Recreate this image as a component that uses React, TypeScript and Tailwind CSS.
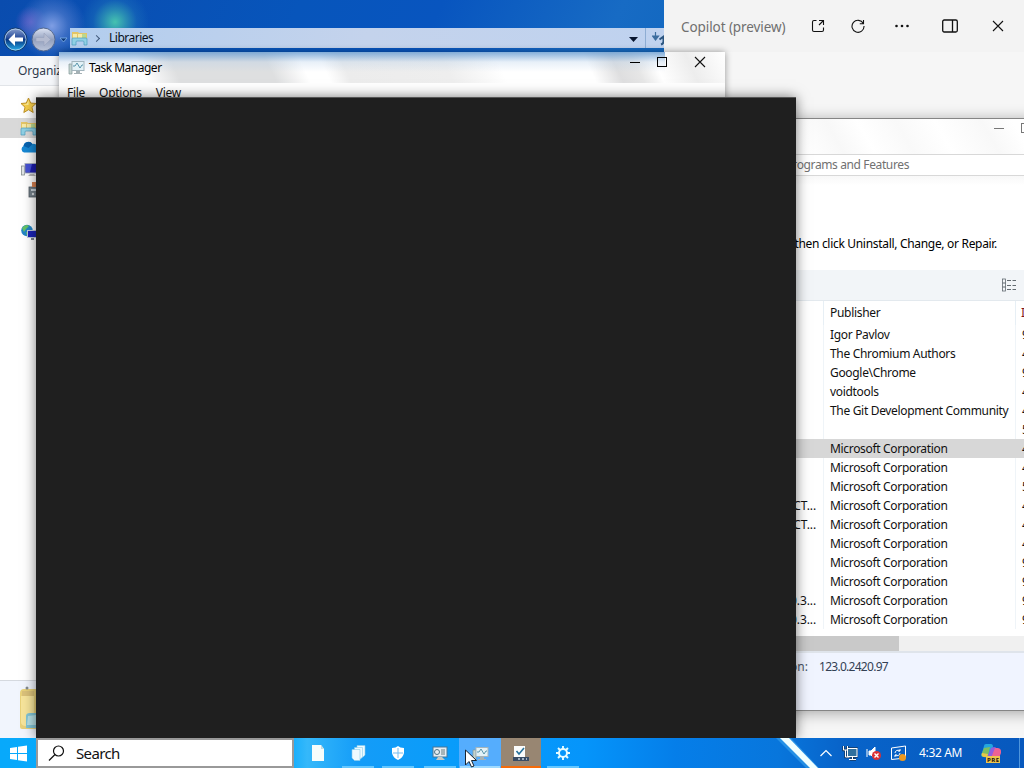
import type { ReactNode } from 'react'

interface Program {
  name?: string
  publisher: string
  installed: string
}

const PROGRAMS: Program[] = [
  { publisher: 'Igor Pavlov', installed: '9/5' },
  { publisher: 'The Chromium Authors', installed: '4/5' },
  { publisher: 'Google\\Chrome', installed: '9/5' },
  { publisher: 'voidtools', installed: '4/5' },
  { publisher: 'The Git Development Community', installed: '4/5' },
  { publisher: '', installed: '5/5' },
  { publisher: 'Microsoft Corporation', installed: '4/5' },
  { publisher: 'Microsoft Corporation', installed: '4/5' },
  { publisher: 'Microsoft Corporation', installed: '5/5' },
  { name: 'CT...', publisher: 'Microsoft Corporation', installed: '4/5' },
  { name: 'CT...', publisher: 'Microsoft Corporation', installed: '4/5' },
  { publisher: 'Microsoft Corporation', installed: '4/5' },
  { publisher: 'Microsoft Corporation', installed: '9/5' },
  { publisher: 'Microsoft Corporation', installed: '9/5' },
  { name: '0.3...', publisher: 'Microsoft Corporation', installed: '9/5' },
  { name: '0.3...', publisher: 'Microsoft Corporation', installed: '9/5' },
]

const SELECTED = 6

function LibraryIcon() {
  return (
    <svg width="17" height="16" viewBox="0 0 17 16" className="shrink-0">
      <path d="M1 2h6l1 1h8v7H1z" fill="#e3c567" />
      <path d="M2 4h4v7H2zM7 4h4v7H7z" fill="#f8eba8" />
      <path d="M11 4h4v6h-4z" fill="#b9d890" />
      <path d="M1 15V9q0-1 1-1h13q1 0 1 1v6h-3v-3q0-1-1-1H6q-1 0-1 1v3z" fill="#8fd0e4" stroke="#4a9bbd" strokeWidth=".7" />
    </svg>
  )
}

function TaskManagerIcon({ className }: { className?: string }) {
  return (
    <svg width="17" height="15" viewBox="0 0 17 15" className={className}>
      <path d="M1 4h3v10H1z" fill="#c3d3cf" stroke="#839a9a" strokeWidth=".7" />
      <rect x="4" y="1.500" width="12" height="9" fill="#e2f1f6" stroke="#a3b5bd" />
      <path d="M5 6h2l2-3 3 5 2-3h1" fill="none" stroke="#4b8ba3" strokeWidth=".9" />
      <path d="M8 11h4v2h2v1H6v-1h2z" fill="#a5b1b5" />
    </svg>
  )
}

function CloseIcon({ size }: { size: number }) {
  return (
    <svg width={size} height={size} viewBox="0 0 12 12">
      <path d="M1 1l10 10M11 1L1 11" fill="none" stroke="#111" strokeWidth="1.1" />
    </svg>
  )
}

function Sidebar() {
  return (
    <div className="flex h-[594px] flex-col bg-white pt-[12px]">
      <div className="-mt-px h-[21px] pl-5">
        <svg width="17" height="17" viewBox="0 0 17 17">
          <path d="M8.500 1l2.200 5 5.300.5-4 3.700 1.200 5.300-4.700-2.800-4.700 2.800L5 10.200 1 6.500 6.300 6z" fill="#f7cf4b" stroke="#b98a1e" strokeWidth=".9" />
          <path d="M8.500 3v5L3 7.200l4-.5z" fill="#fdf0a8" />
        </svg>
      </div>
      <div className="flex h-[20px] items-center bg-[#d9d9d9] pl-5">
        <LibraryIcon />
      </div>
      <div className="h-[20px] pl-5 pt-[2px]">
        <svg width="18" height="14" viewBox="0 0 18 14">
          <path d="M4 12.500a3.500 3.500 0 0 1-.4-6.500A5 5 0 0 1 12.500 4 5 5 0 0 1 17 12.500z" fill="#1688d4" />
          <path d="M3.500 6A5 5 0 0 1 12.500 4l-4 4z" fill="#0763b0" />
        </svg>
      </div>
      <div className="h-[22px] pl-5 pt-[4px]">
        <svg width="18" height="16" viewBox="0 0 18 16">
          <rect x="1.500" y="4" width="3" height="9" fill="#e0e4e4" stroke="#858e8e" strokeWidth=".8" />
          <rect x="5" y="1.500" width="12" height="9.500" fill="#1c1cad" stroke="#aab2c6" />
          <path d="M6 2h6l-2 8H6z" fill="#4652d6" />
          <path d="M10 12h4l2 2H8z" fill="#b5b5b5" />
        </svg>
      </div>
      <div className="h-[43px] pl-7 pt-px">
        <svg width="12" height="17" viewBox="0 0 12 17">
          <rect x="1" y="6" width="10" height="10" fill="#74808a" stroke="#505a62" strokeWidth=".8" />
          <rect x="4" y="1" width="5" height="5" fill="#d98252" />
          <path d="M3 8h5v2H3z" fill="#c7d1d8" />
          <circle cx="5" cy="13" r="1.200" fill="#d7dde0" />
        </svg>
      </div>
      <div className="h-[20px] pl-5 pt-px">
        <svg width="18" height="17" viewBox="0 0 18 17">
          <circle cx="7" cy="6.500" r="5.800" fill="#2285c6" />
          <path d="M2 4q4-5 7-2l-3 3-2 3zM6 8l4 1-3 3z" fill="#65c266" />
          <rect x="7.500" y="6.500" width="10" height="7" fill="#1b24b8" stroke="#bcc9dd" />
          <path d="M11 14h3v2h-3z" fill="#7b8390" />
        </svg>
      </div>
    </div>
  )
}

function ExplorerWindow() {
  return (
    <div className="absolute left-0 top-0 flex h-[738px] w-[664px] flex-col bg-[linear-gradient(115deg,#0a4cae_0%,#0755bb_30%,#0855bf_44%,#176bc4_62%,#0e65bd_76%,#024da9_79%,#1262b9_84%,#0759ae_100%)]">
      <div className="pointer-events-none absolute left-0 top-0 h-14 w-full bg-[radial-gradient(circle_at_115px_22px,#46c2b0_0,#2f98b4cc_12px,#1f76bb66_22px,transparent_34px),radial-gradient(circle_at_52px_26px,#7f9ee4_0,#5880d099_16px,transparent_34px),radial-gradient(circle_at_31px_22px,#5f57c4_0,transparent_16px)]" />
      <div className="relative flex h-14 shrink-0 items-end">
        <svg width="70" height="28" viewBox="0 0 70 28" className="mb-[3px] shrink-0">
          <defs>
            <linearGradient id="back" x2="0" y2="1">
              <stop stopColor="#8fa4d0" />
              <stop offset=".42" stopColor="#2a4f9d" />
              <stop offset=".5" stopColor="#073581" />
              <stop offset="1" stopColor="#28b1ed" />
            </linearGradient>
            <linearGradient id="forward" x2="0" y2="1">
              <stop stopColor="#dde4f4" />
              <stop offset=".5" stopColor="#929fbd" />
              <stop offset="1" stopColor="#bdc6da" />
            </linearGradient>
          </defs>
          <circle cx="15.500" cy="14.500" r="11.500" fill="url(#back)" stroke="#123769" />
          <circle cx="15.500" cy="14.500" r="10.500" fill="none" stroke="#b6d5ef" strokeWidth=".8" />
          <path d="M15 8l-6.500 6.500L15 21v-4.500h8v-4h-8z" fill="#fff" />
          <circle cx="43.500" cy="14.500" r="11.500" fill="url(#forward)" stroke="#526890" />
          <path d="M44 8l6.500 6.500L44 21v-4.500h-8v-4h8z" fill="#b4bbd0" stroke="#98a3be" strokeWidth=".6" />
          <path d="M60 13h7l-3.500 4z" fill="#0b397c" stroke="#80b3e9" strokeWidth=".8" />
        </svg>
        <div className="mb-2 flex h-5 flex-1 items-center bg-gradient-to-r from-[#b2cdee] via-[#c4d3ec] to-[#bfd2ef] pl-px">
          <LibraryIcon />
          <span className="ml-[6px] h-[5px] w-[5px] rotate-45 border-r border-t border-[#425b7c]" />
          <span className="ml-[10px] text-[12px] tracking-[-0.5px] text-[#081120]">Libraries</span>
          <svg width="9" height="5" viewBox="0 0 9 5" className="ml-auto mr-[7px] mt-[2px]">
            <path d="M0 0h9L4.500 5z" fill="#08152e" />
          </svg>
          <div className="flex h-5 w-[19px] items-center overflow-hidden border-l border-[#8eadd3] pl-[6px]">
            <svg width="13" height="14" viewBox="0 0 13 14" className="mt-px shrink-0">
              <path d="M3.500 0v5M.5 4h6l-3 4z" fill="#3c6d9e" stroke="#3c6d9e" strokeWidth="1.200" />
              <path d="M7.500 7.500l4-3v5q0 2-2.500 3" fill="none" stroke="#2c5680" strokeWidth="2" />
            </svg>
          </div>
        </div>
      </div>
      <div className="flex h-[30px] shrink-0 items-center border-b border-[#e1e4e8] bg-[#f5f7fa] pl-[18px] text-[12px] tracking-[-0.1px] text-[#2f3a4c]">
        Organize
      </div>
      <Sidebar />
      <div className="flex flex-1 border-t border-[#d5d9df] bg-[#f1f5fd] pl-[18px] pt-1">
        <svg width="42" height="48" viewBox="0 0 42 48">
          <path d="M2 8q0-4 4-4h22v40H4q-2 0-2-2z" fill="#e8d17a" />
          <path d="M3 11h13v32l-9-2q-4-1-4-4z" fill="#f6e49b" />
          <path d="M4 6h12v5H4z" fill="#dac17a" />
          <circle cx="9" cy="3" r="1.500" fill="#848b8f" />
          <path d="M8 43V31q0-3 4-3h18v15z" fill="#80c4d6" />
          <path d="M10 31l8-1v10H9z" fill="#b6e0e5" />
        </svg>
      </div>
    </div>
  )
}

function CopilotPanel() {
  return (
    <div className="absolute right-0 top-0 flex h-[738px] w-[360px] flex-col bg-[#f6f6f6]">
      <div className="flex h-[52px] items-center bg-[#f3f3f3] pl-[17px] text-[#111]">
        <span className="w-[130px] pt-[3px] text-[13.500px] tracking-[-0.08px] whitespace-nowrap text-[#6f6f6f]">Copilot (preview)</span>
        <svg width="14" height="14" viewBox="0 0 14 14" fill="none" stroke="currentColor" strokeWidth="1.100">
          <path d="M5.500 1.500H3q-1.500 0-1.500 1.500v8q0 1.500 1.500 1.500h8q1.500 0 1.500-1.500V8.500M8 1.500h4.500V6M12.500 1.500L8 6" />
        </svg>
        <svg width="14" height="14" viewBox="0 0 14 14" fill="none" stroke="currentColor" strokeWidth="1.100" className="ml-[26px]">
          <path d="M12.300 4.500A6 6 0 1 0 13 7M12.500 1v3.700H8.800" />
        </svg>
        <svg width="14" height="4" viewBox="0 0 14 4" fill="currentColor" className="ml-[30px]">
          <circle cx="1.500" cy="2" r="1.300" />
          <circle cx="7" cy="2" r="1.300" />
          <circle cx="12.500" cy="2" r="1.300" />
        </svg>
        <svg width="16" height="14" viewBox="0 0 16 14" fill="none" stroke="currentColor" strokeWidth="1.300" className="ml-[33px]">
          <rect x=".7" y="1" width="14.600" height="12" rx="1.500" />
          <path d="M10.500 1v12" />
        </svg>
        <span className="ml-[34px]">
          <CloseIcon size={12} />
        </span>
      </div>
    </div>
  )
}

function ProgramsWindow() {
  return (
    <div className="absolute left-[400px] top-[118px] flex h-[593px] w-[760px] flex-col border border-[#858585] bg-white shadow-[0_2px_14px_#00000055]">
      <div className="flex h-[35px] shrink-0 bg-[linear-gradient(60deg,#fff_52%,#f8f8f8_57%,#fff_61%,#f9f9f9_66%,#fff_71%,#f8f8f8_77%,#fff_81%)] pl-[593px] pt-[4px]">
        <span className="mt-[5px] h-px w-[10px] bg-[#777]" />
        <span className="ml-[17px] h-[10px] w-[10px] border border-[#777]" />
      </div>
      <div className="flex h-[22px] shrink-0 items-center border-y border-[#d8d8d8] text-[12px] text-[#717171]">
        <span className="w-[508px] text-right tracking-[-0.38px]">Programs and Features</span>
      </div>
      <div className="flex h-[94px] shrink-0 items-end bg-gradient-to-b from-[#f8f8f8] to-white to-10% pb-[17px] text-[12px] text-black">
        <span className="w-[596px] text-right tracking-[-0.31px]">then click Uninstall, Change, or Repair.</span>
      </div>
      <div className="flex h-[31px] shrink-0 items-center border-b border-[#e3e9ee] bg-[#f2f5f8] pl-[600px]">
        <svg width="16" height="14" viewBox="0 0 16 14" fill="none" stroke="#626a70">
          <rect x="1.500" y="1" width="3" height="12" strokeWidth=".8" />
          <path d="M1.500 5h3M1.500 9h3M6 2.500h4M11.500 2.500H15M6 7.500h4M11.500 7.500H15M6 11.500h4M11.500 11.500H15" />
        </svg>
      </div>
      <div className="flex h-[335px] shrink-0 flex-col text-[12px] text-[#111]">
        <div className="grid h-[24px] shrink-0 grid-cols-[422px_193px_1fr] items-center">
          <span />
          <span className="flex h-full items-center border-x border-[#e7eff5] pl-[6px] tracking-[-0.3px]">Publisher</span>
          <span className="pl-[5px] text-[#801515]">Installed On</span>
        </div>
        {PROGRAMS.map((program, index) => (
          <div
            key={index}
            className={`grid h-[19px] shrink-0 grid-cols-[422px_193px_1fr] items-center ${index === SELECTED ? 'bg-[#d7d7d7]' : ''}`}
          >
            <span className="pr-[7px] text-right tracking-[-0.1px]">{program.name}</span>
            <span
              className={`flex h-full items-center border-x pl-[6px] tracking-[-0.32px] whitespace-nowrap ${index === SELECTED ? 'border-[#d7d7d7]' : 'border-[#eff4f8]'}`}
            >
              {program.publisher}
            </span>
            <span className="pl-[6px]">{program.installed}</span>
          </div>
        ))}
        <div className="flex-1" />
      </div>
      <div className="flex h-[15px] shrink-0 bg-[#f0f0f0]">
        <span className="w-[498px] bg-[#c9c9c9]" />
      </div>
      <div className="flex flex-1 items-start border-t-2 border-[#dfe4eb] bg-[#f0f4ff] pt-[5px] text-[12px] text-[#495467]">
        <span className="w-[407px] text-right">Product version:</span>
        <span className="ml-[11px] tracking-[-0.72px] text-[#334054]">123.0.2420.97</span>
      </div>
    </div>
  )
}

function TaskManagerWindow() {
  return (
    <div className="absolute left-[59px] top-[52px] flex h-[660px] w-[666px] flex-col bg-white shadow-[0_0_7px_#00000066]">
      <div className="relative flex h-[31px] shrink-0 items-center bg-[linear-gradient(65deg,#fff_0%,#fff_13%,#dedfe0_18%,#dedfe0_32%,#fff_37%,#fff_40%,#ececec_43%,#eeeeee_58%,#fff_66%,#fff_79%,#dededf_83%,#e6e6e6_86%,#fff_89%,#ededed_94%,#fff_100%)] pl-[9px]">
        <div className="absolute left-0 top-0 h-5 w-[606px] bg-gradient-to-b from-[#659ad0cc] via-[#b4cee950] to-transparent" />
        <TaskManagerIcon className="relative" />
        <span className="relative ml-1 pt-px text-[12px] tracking-[-0.5px] text-black">Task Manager</span>
        <div className="relative ml-auto mr-[19px] flex h-full items-start pt-[5px]">
          <span className="mt-[5px] h-px w-[10px] bg-black" />
          <span className="ml-[17px] h-[10px] w-[10px] border border-black" />
          <span className="-mt-px ml-[27px]">
            <CloseIcon size={12} />
          </span>
        </div>
      </div>
      <div className="flex h-5 items-center gap-[14px] pl-2 text-[12px] tracking-[-0.28px] text-[#111]">
        <span>File</span>
        <span>Options</span>
        <span>View</span>
      </div>
    </div>
  )
}

function TaskButton({ children, width, state = 'idle' }: { children: ReactNode; width: string; state?: 'idle' | 'open' | 'hover' | 'alert' }) {
  const background = state === 'hover' ? 'bg-[#55adfd]' : state === 'alert' ? 'bg-[#988672]' : ''
  const line = state === 'open' ? 'w-8 bg-[#65c7ff]' : state === 'hover' ? 'w-10 bg-[#9fdaff]' : state === 'alert' ? 'w-10 bg-[#f46b0a]' : 'w-0'
  return (
    <div className={`flex h-[30px] shrink-0 flex-col items-center justify-between ${width} ${background}`}>
      <div className="flex h-7 items-center pt-[2px]">{children}</div>
      <span className={`h-[2px] ${line}`} />
    </div>
  )
}

function Taskbar() {
  return (
    <div className="absolute bottom-0 left-0 flex h-[30px] w-full items-center overflow-hidden bg-[linear-gradient(90deg,#08a9fb_0,#0aaafd_28%,#35b8fa_30%,#149cf8_35%,#099cfa_44%,#0595fb_57%,#057ee9_66%,#0876dc_76%,#0864ca_82%,#0758bd_100%)]">
      <div className="flex h-full w-[36px] shrink-0 items-center justify-center">
        <svg width="17" height="17" viewBox="0 0 17 17" fill="#fff">
          <path d="M0 3l7-1v6H0zM8 1.800L17 .5V8H8zM0 9h7v6l-7-1zM8 9h9v7.500L8 15.200z" />
        </svg>
      </div>
      <div className="flex h-[30px] w-[258px] shrink-0 items-center border-2 border-[#999] bg-white pl-[10px]">
        <svg width="17" height="17" viewBox="0 0 17 17" fill="none" stroke="#111" strokeWidth="1.200">
          <circle cx="10.500" cy="6" r="5" />
          <path d="M7 9.500L1 15.500" />
        </svg>
        <span className="ml-[11px] text-[15px] tracking-[-0.65px] text-[#111]">Search</span>
      </div>
      <TaskButton width="w-[47px]">
        <svg width="14" height="16" viewBox="0 0 14 16">
          <path d="M1 0h9l3 4v12H1z" fill="#f7fdfb" />
          <path d="M10 0v4h3z" fill="#c4dce2" />
        </svg>
      </TaskButton>
      <TaskButton width="w-[34px]" state="open">
        <svg width="15" height="16" viewBox="0 0 15 16" fill="#eefaff" stroke="#8acbe9" strokeWidth=".6">
          <path d="M6 .5h8v9.500l-2 2H6z" />
          <path d="M3.500 2.500h8V12l-2 2h-6z" />
          <path d="M1 4.500h8v11H3.500L1 13z" />
        </svg>
      </TaskButton>
      <TaskButton width="w-[46px]" state="open">
        <svg width="12" height="14" viewBox="0 0 12 14">
          <path d="M0 2q4 0 6-2 2 2 6 2v5q-1 5-6 7Q1 12 0 7z" fill="#fff" />
          <path d="M6 2v10M1 7h10" stroke="#77bdf0" />
        </svg>
      </TaskButton>
      <TaskButton width="w-[38px]" state="open">
        <svg width="16" height="15" viewBox="0 0 16 15">
          <rect x="1" y="1" width="14" height="10" fill="#e5edf2" stroke="#467697" />
          <circle cx="5" cy="6" r="2.500" fill="none" stroke="#4d7486" />
          <path d="M9 4h4M9 6h4M9 8h4" stroke="#667c80" />
          <path d="M6 11h4l3 3H4z" fill="#c4c9c4" />
        </svg>
      </TaskButton>
      <TaskButton width="w-[42px]" state="hover">
        <TaskManagerIcon />
      </TaskButton>
      <TaskButton width="w-[40px]" state="alert">
        <svg width="16" height="17" viewBox="0 0 16 17">
          <path d="M1 1h11v11H1z" fill="#fbfcfc" />
          <path d="M3.500 6l2.500 3 5-6" fill="none" stroke="#26709a" strokeWidth="1.600" />
          <path d="M0 12h16v4H0z" fill="#384c65" />
          <path d="M5 14h2M9 14h2M13 14h1" stroke="#c8d3df" strokeWidth="1.500" />
        </svg>
      </TaskButton>
      <TaskButton width="w-[43px]" state="open">
        <svg width="14" height="14" viewBox="0 0 14 14" fill="none" stroke="#e6fbff">
          <circle cx="7" cy="7" r="4" strokeWidth="2" />
          <path d="M7 0v3M7 11v3M0 7h3M11 7h3M2 2l2 2M10 10l2 2M12 2l-2 2M4 10l-2 2" strokeWidth="1.900" />
        </svg>
      </TaskButton>

      {/* light ray of the wallpaper */}
      <svg width="60" height="30" viewBox="0 0 60 30" className="ml-auto shrink-0">
        <path d="M16 0L46 30h13L31 0z" fill="#4ab5f7" opacity=".45" />
        <path d="M20 0l30 30h8L29 0z" fill="#f0ffff" />
      </svg>
      <div className="flex h-full shrink-0 items-center text-white">
        <svg width="12" height="8" viewBox="0 0 12 8" fill="none" stroke="currentColor" strokeWidth="1.200">
          <path d="M.5 7L6 1.500 11.500 7" />
        </svg>
        <svg width="16" height="16" viewBox="0 0 16 16" fill="none" stroke="currentColor" className="ml-[10px]">
          <path d="M1.500 1v4h4V1M3.500 5v7h4M6.500 3.500h8v8h-8zM8 14.500h6M11 12v2" stroke="#183a60" strokeWidth="2.500" />
          <rect x="5.500" y="3.500" width="9.500" height="8" fill="#2f6f9d" />
          <path d="M1.500 1v4h4V1M3.500 5v7h4M7 14.500h7M10.500 12v2" />
        </svg>
        <svg width="16" height="16" viewBox="0 0 16 16" className="ml-2">
          <path d="M1 4v8M3 6h2l4-4v12l-4-4H3z" fill="#fff" stroke="#fff" />
          <circle cx="10.500" cy="10.500" r="4.500" fill="#da3036" />
          <path d="M8.500 8.500l4 4M12.500 8.500l-4 4" stroke="#fff" strokeWidth="1.400" />
        </svg>
        <svg width="17" height="17" viewBox="0 0 17 17" className="ml-[8px]" fill="none" stroke="#fff">
          <path d="M1.500 3L15.500 1v12L1.500 14.500z" />
          <path d="M5 8a3 3 0 0 1 5-2V4M10 6H8M10 8a3 3 0 0 1-5 2v2M5 10h2" />
          <circle cx="12.500" cy="12.500" r="3.500" fill="#ed991f" stroke="none" />
        </svg>
        <span className="ml-[12px] w-[60px] text-[12px] tracking-[-0.35px] whitespace-nowrap">4:32 AM</span>
        <svg width="20" height="20" viewBox="0 0 20 20" className="ml-0.5">
          <path d="M5 1h5q2 0 2 3L9 12q-1 3-4 2H2q-3-1-1-4L3 3q0-2 2-2z" fill="#23a6df" />
          <path d="M3 5l6-1-2 9q-1 2-4 1-4 0-2-4z" fill="#7ebd62" />
          <path d="M10 5l3-1q3 0 2 3l-3 8H6z" fill="#915cdf" />
          <path d="M14 5h3q4 1 3 5l-2 5h-8z" fill="#ed6293" />
          <path d="M1 10l6 1-1 3H3q-3-1-2-4z" fill="#e7c748" />
          <rect x="5" y="13" width="14" height="7" fill="#eec54d" />
          <text x="6" y="19" fontSize="6" fontWeight="700" fill="#111" textLength="12">PRE</text>
        </svg>
        <span className="ml-[18px] mr-[4px] h-full w-px bg-[#4e95dc]" />
      </div>
    </div>
  )
}

function Cursor() {
  return (
    <svg width="13" height="20" viewBox="0 0 13 20" className="absolute left-[465px] top-[749px]">
      <path d="M.5 1v15l3.500-3.500L6.500 18l2.500-1-2.500-5.500h5z" fill="#fff" stroke="#182431" />
    </svg>
  )
}

export default function App() {
  return (
    <div className="relative h-[768px] w-[1024px] overflow-hidden bg-[#0a5bc0] font-['Noto_Sans','Open_Sans',sans-serif]">
      <ExplorerWindow />
      <CopilotPanel />
      <ProgramsWindow />
      <TaskManagerWindow />
      <div className="absolute left-[36px] top-[97px] h-[641px] w-[760px] border-t border-[#555] bg-[#1f1f1f] shadow-[0_0_12px_#00000088]" />
      <Taskbar />
      <Cursor />
    </div>
  )
}
